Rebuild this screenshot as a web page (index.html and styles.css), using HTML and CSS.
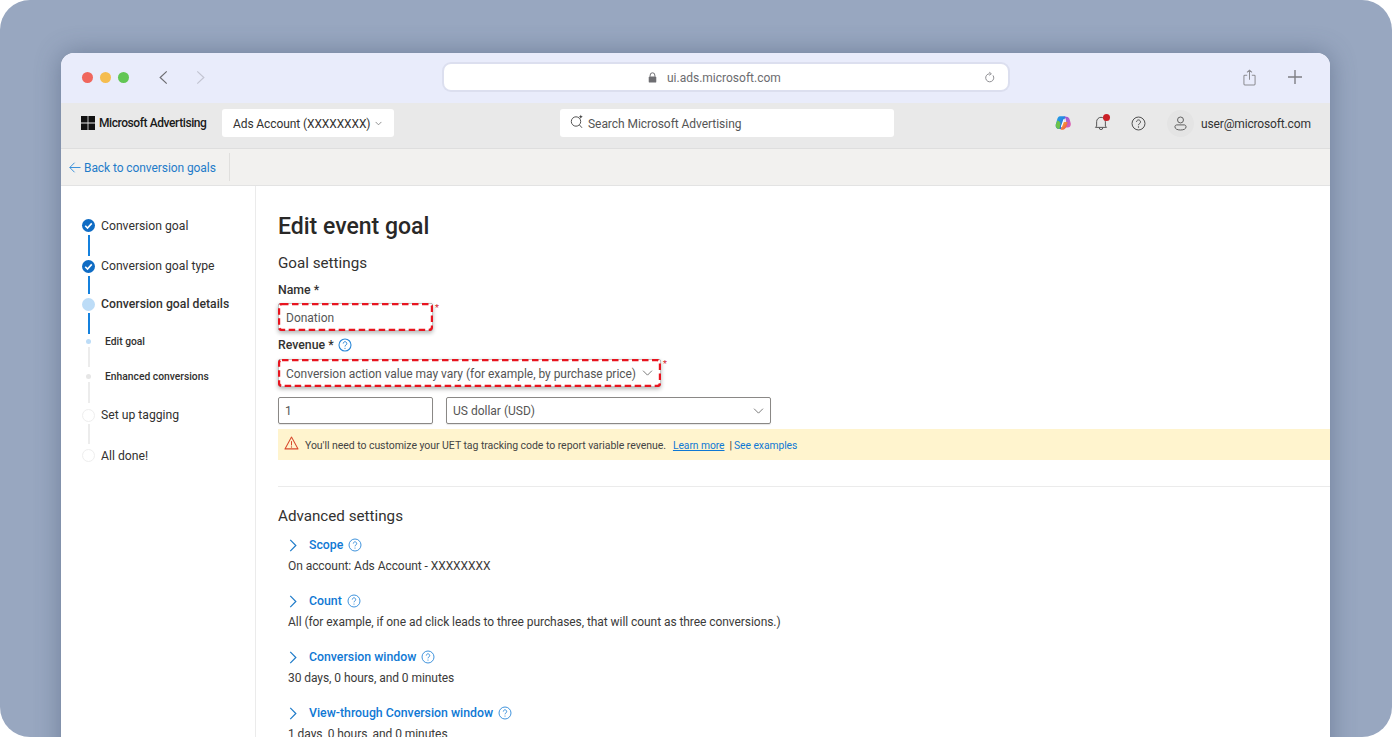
FILE: index.html
```html
<!DOCTYPE html>
<html lang="en">
<head>
<meta charset="utf-8">
<title>Edit event goal</title>
<link rel="stylesheet" href="styles.css">
</head>
<body>
<div class="page">
  <div class="window">
    <div class="toolbar">
      <div class="lights"><i class="red"></i><i class="yellow"></i><i class="green"></i></div>
      <svg class="nav back" viewBox="0 0 10 16"><path d="M9 1.500 2 8l7 6.500"/></svg>
      <svg class="nav fwd" viewBox="0 0 10 16"><path d="M1 1.500 8 8l-7 6.500"/></svg>
      <div class="url">
        <svg class="lock" viewBox="0 0 10 12"><path d="M2.400 5V3.400a2.600 2.600 0 0 1 5.200 0V5" fill="none" stroke="#6e6e72" stroke-width="1.100"/><rect x=".8" y="5" width="8.400" height="6.600" rx="1" fill="#6e6e72"/></svg>
        <span class="nudge">ui.ads.microsoft.com</span>
        <svg class="reload" viewBox="0 0 12 13"><path d="M9.800 4.200a4.400 4.400 0 1 1-3.600-1.800" fill="none" stroke="#85858a" stroke-width="1"/><path d="M5.700.7 8 2.400 5.700 4.100" fill="none" stroke="#85858a" stroke-width="1"/></svg>
      </div>
      <svg class="share" viewBox="0 0 14 18"><path d="M4.500 6.500H2a1 1 0 0 0-1 1V16a1 1 0 0 0 1 1h10a1 1 0 0 0 1-1V7.500a1 1 0 0 0-1-1H9.500M7 11.500V1M4.300 3.500 7 1l2.700 2.500" fill="none" stroke="#8c8c92" stroke-width="1.100"/></svg>
      <svg class="plus" viewBox="0 0 14 14"><path d="M7 0v14M0 7h14" stroke="#7e7e84" stroke-width="1.400"/></svg>
    </div>

    <header class="appbar">
      <svg class="winlogo" viewBox="0 0 14 14"><path d="M0 0h6.600v6.600H0zM7.400 0H14v6.600H7.400zM0 7.400h6.600V14H0zM7.400 7.400H14V14H7.400z" fill="#111"/></svg>
      <span class="brand">Microsoft Advertising</span>
      <div class="account"><span class="nudge">Ads Account (XXXXXXXX)</span><svg viewBox="0 0 8 5"><path d="M.7.7 4 4l3.300-3.300" fill="none" stroke="#777" stroke-width=".9"/></svg></div>
      <div class="search">
        <svg viewBox="0 0 15 15"><circle cx="6" cy="7.500" r="4.700" fill="none" stroke="#555" stroke-width="1"/><path d="m9.500 11 2.500 2.800" stroke="#555" stroke-width="1"/><path d="M10.800.5c.3 1.500.7 2 2.200 2.300-1.500.3-1.900.8-2.200 2.300-.3-1.500-.7-2-2.200-2.300 1.500-.3 1.900-.8 2.200-2.300Z" fill="#444"/></svg>
        <span class="nudge">Search Microsoft Advertising</span>
      </div>
      <div class="tools">
        <svg class="copilot" viewBox="0 0 16 16">
          <defs>
            <linearGradient id="cpA" x1="0" y1="0" x2="1" y2="1"><stop offset="0" stop-color="#22a7e8"/><stop offset="1" stop-color="#2b5fd9"/></linearGradient>
            <linearGradient id="cpB" x1="0" y1="0" x2="1" y2="1"><stop offset="0" stop-color="#f7b53a"/><stop offset="1" stop-color="#f0483f"/></linearGradient>
            <linearGradient id="cpC" x1="0" y1="0" x2="1" y2="1"><stop offset="0" stop-color="#8a5be0"/><stop offset="1" stop-color="#ec5fa8"/></linearGradient>
          </defs>
          <path d="M5 1.300h5.500L8 9 6 14H4C1.500 14 .2 12 .8 9.500L2 5C2.500 3 3.500 1.300 5 1.300Z" fill="url(#cpA)"/>
          <path d="M.8 9.500 2.300 5.500c1.500.2 3 1.200 3.200 3L4.500 14C2 14 .2 12 .8 9.500Z" fill="#6cc24a"/>
          <path d="M9 1.800h2.400c2 0 3 1.500 3.500 3.400l.8 3c.5 2.500-.7 4.400-3 4.400H9.400L11 7C11.500 5 10.500 3 9 1.800Z" fill="url(#cpC)"/>
          <path d="M5.500 14.700 8.300 7h4.200c-.2 2.500-1.500 7.700-4.700 7.700Z" fill="url(#cpB)"/>
          <path d="M6.500 11.500 9 4.500" stroke="#fff" stroke-width="1.200" stroke-linecap="round"/>
        </svg>
        <div class="bell">
          <svg viewBox="0 0 16 18"><path d="M3 12.500V7.500a5 5 0 0 1 10 0v5l1.300 1.500H1.700ZM6 14.500a2 2 0 0 0 4 0" fill="none" stroke="#444" stroke-width="1"/></svg>
          <i></i>
        </div>
        <svg class="help" viewBox="0 0 16 16"><circle cx="8" cy="8" r="6.900" fill="none" stroke="#444" stroke-width="1"/><path d="M5.900 6.200a2.100 2.100 0 1 1 3.300 1.800c-.8.500-1.200.9-1.200 1.800" fill="none" stroke="#444" stroke-width="1"/><circle cx="8" cy="11.700" r=".7" fill="#444"/></svg>
        <div class="avatar"><svg viewBox="0 0 14 16"><circle cx="7" cy="4.200" r="3.200" fill="none" stroke="#555" stroke-width="1"/><path d="M1 11.500c0-1.200 1-2 2-2h8c1 0 2 .8 2 2 0 2.300-2.500 3.500-6 3.500s-6-1.200-6-3.500Z" fill="none" stroke="#555" stroke-width="1"/></svg></div>
        <span class="user nudge">user@microsoft.com</span>
      </div>
    </header>

    <div class="subnav">
      <a class="backlink"><svg viewBox="0 0 13 12"><path d="M12.500 6H1M6 .8 .8 6 6 11.200" fill="none" stroke="#2b88d8" stroke-width="1"/></svg><span class="nudge">Back to conversion goals</span></a>
    </div>

    <div class="body">
      <nav class="sidebar">
        <div class="step"><span class="dot done"><svg viewBox="0 0 12 12"><path d="m3 6.200 2.100 2.100L9 4" fill="none" stroke="#fff" stroke-width="1.500"/></svg></span><span class="nudge">Conversion goal</span></div>
        <div class="line on la"></div>
        <div class="step"><span class="dot done"><svg viewBox="0 0 12 12"><path d="m3 6.200 2.100 2.100L9 4" fill="none" stroke="#fff" stroke-width="1.500"/></svg></span><span>Conversion goal type</span></div>
        <div class="line on lb"></div>
        <div class="step strong"><span class="dot current"></span><span>Conversion goal details</span></div>
        <div class="line on lc"></div>
        <div class="step sub"><span class="mini blue"></span><span>Edit goal</span></div>
        <div class="line ld"></div>
        <div class="step sub"><span class="mini"></span><span>Enhanced conversions</span></div>
        <div class="line le"></div>
        <div class="step"><span class="dot empty"></span><span>Set up tagging</span></div>
        <div class="line lf"></div>
        <div class="step"><span class="dot empty"></span><span class="nudge">All done!</span></div>
      </nav>

      <main class="main">
        <h1>Edit event goal</h1>
        <h2 class="first">Goal settings</h2>
        <div class="label">Name *</div>
        <div class="marked short">
          <div class="field"><span class="nudge">Donation</span><svg class="dash" viewBox="0 0 155 28"><rect x="1" y="1" width="153" height="26" rx="3"/></svg></div>
          <span class="req">*</span>
        </div>
        <div class="label rev">Revenue * <svg class="q" viewBox="0 0 14 14"><circle cx="7" cy="7" r="6" fill="none" stroke="#2b88d8" stroke-width="1.100"/><path d="M5.200 5.500a1.800 1.800 0 1 1 2.800 1.500c-.7.400-1 .8-1 1.500" fill="none" stroke="#2b88d8" stroke-width="1"/><circle cx="7" cy="10.300" r=".6" fill="#2b88d8"/></svg></div>
        <div class="marked long">
          <div class="field select"><span class="nudge">Conversion action value may vary (for example, by purchase price)</span><svg class="arrow" viewBox="0 0 12 7"><path d="M.8.8 6 6l5.200-5.200" fill="none" stroke="#666" stroke-width="1"/></svg><svg class="dash" viewBox="0 0 383 28"><rect x="1" y="1" width="381" height="26" rx="3"/></svg></div>
          <span class="req">*</span>
        </div>
        <div class="pair">
          <div class="plain amount">1</div>
          <div class="plain select currency"><span>US dollar (USD)</span><svg class="arrow" viewBox="0 0 12 7"><path d="M.8.8 6 6l5.200-5.200" fill="none" stroke="#666" stroke-width="1"/></svg></div>
        </div>
        <div class="warn">
          <svg viewBox="0 0 16 15"><path d="M8 1.200 15 13.800H1Z" fill="none" stroke="#d8492d" stroke-width="1.100" stroke-linejoin="round"/><path d="M8 5.500v4.600" stroke="#d8492d" stroke-width="1.100"/><circle cx="8" cy="11.800" r=".7" fill="#d8492d"/></svg>
          <span class="warntext nudge">You'll need to customize your UET tag tracking code to report variable revenue.</span>
          <a class="under nudge">Learn more</a><span class="bar nudge">|</span><a class="nudge">See examples</a>
        </div>
        <hr>
        <h2>Advanced settings</h2>
        <section class="adv">
          <div class="advhead"><svg class="chev" viewBox="0 0 9 14"><path d="M1 1l6 6-6 6"/></svg><a>Scope</a><svg class="q" viewBox="0 0 14 14"><circle cx="7" cy="7" r="6" fill="none" stroke="#2b88d8" stroke-width=".9"/><path d="M5.300 5.500a1.700 1.700 0 1 1 2.700 1.400c-.7.400-1 .8-1 1.400" fill="none" stroke="#2b88d8" stroke-width=".9"/><circle cx="7" cy="10" r=".6" fill="#2b88d8"/></svg></div>
          <p>On account: Ads Account - XXXXXXXX</p>
        </section>
        <section class="adv">
          <div class="advhead"><svg class="chev" viewBox="0 0 9 14"><path d="M1 1l6 6-6 6"/></svg><a>Count</a><svg class="q" viewBox="0 0 14 14"><circle cx="7" cy="7" r="6" fill="none" stroke="#2b88d8" stroke-width=".9"/><path d="M5.300 5.500a1.700 1.700 0 1 1 2.700 1.400c-.7.400-1 .8-1 1.400" fill="none" stroke="#2b88d8" stroke-width=".9"/><circle cx="7" cy="10" r=".6" fill="#2b88d8"/></svg></div>
          <p>All (for example, if one ad click leads to three purchases, that will count as three conversions.)</p>
        </section>
        <section class="adv">
          <div class="advhead"><svg class="chev" viewBox="0 0 9 14"><path d="M1 1l6 6-6 6"/></svg><a>Conversion window</a><svg class="q" viewBox="0 0 14 14"><circle cx="7" cy="7" r="6" fill="none" stroke="#2b88d8" stroke-width=".9"/><path d="M5.300 5.500a1.700 1.700 0 1 1 2.700 1.400c-.7.400-1 .8-1 1.400" fill="none" stroke="#2b88d8" stroke-width=".9"/><circle cx="7" cy="10" r=".6" fill="#2b88d8"/></svg></div>
          <p>30 days, 0 hours, and 0 minutes</p>
        </section>
        <section class="adv">
          <div class="advhead"><svg class="chev" viewBox="0 0 9 14"><path d="M1 1l6 6-6 6"/></svg><a>View-through Conversion window</a><svg class="q" viewBox="0 0 14 14"><circle cx="7" cy="7" r="6" fill="none" stroke="#2b88d8" stroke-width=".9"/><path d="M5.300 5.500a1.700 1.700 0 1 1 2.700 1.400c-.7.400-1 .8-1 1.400" fill="none" stroke="#2b88d8" stroke-width=".9"/><circle cx="7" cy="10" r=".6" fill="#2b88d8"/></svg></div>
          <p>1 days, 0 hours, and 0 minutes</p>
        </section>
      </main>
    </div>
  </div>
</div>
</body>
</html>
```

FILE: styles.css
```css
* { box-sizing: border-box; }
html, body { margin: 0; height: 100%; background: #fff; overflow: hidden; }
body { font-family: Roboto, "Noto Sans", sans-serif; font-size: 12px; color: #323130; white-space: nowrap; }
svg { display: block; flex: none; }
a { color: #0f78d4; }
.nudge { padding-top: 2px; }

.page {
  height: 737px;
  padding: 53px 62px 0 61px;
  background: #98a7c0;
  border-radius: 30px;
  overflow: hidden;
}
.window {
  height: 720px;
  background: #fff;
  border-radius: 13px 13px 0 0;
  overflow: hidden;
  box-shadow: 0 0 26px rgba(60, 75, 105, .45);
}

/* browser chrome */
.toolbar {
  height: 50px;
  padding: 0 0 2px 21px;
  background: #e9ecfb;
  display: flex;
  align-items: center;
}
.lights { display: flex; gap: 7px; }
.lights i { width: 11px; height: 11px; border-radius: 50%; }
.red { background: #f0665d; }
.yellow { background: #f5bd4f; }
.green { background: #62c654; }
.nav { width: 10px; height: 15px; fill: none; stroke-width: 1.300; }
.back { margin-left: 29px; stroke: #6f6f74; }
.fwd { margin-left: 28px; stroke: #c3c5d2; }
.url {
  margin-left: 238px;
  width: 564px;
  height: 26px;
  padding-left: 204px;
  background: #fff;
  border-radius: 7px;
  box-shadow: 0 0 0 2px #dcdfef;
  display: flex;
  align-items: center;
  color: #6c6c70;
  font-size: 12px;
}
.lock { width: 9px; height: 11px; margin-right: 10px; }
.reload { width: 11px; height: 13px; margin-left: auto; margin-right: 13px; }
.share { width: 13px; height: 17px; margin-left: 235px; }
.plus { width: 14px; height: 14px; margin-left: 32px; }

/* app bar */
.appbar {
  height: 46px;
  padding: 0 20px 5px 20px;
  background: #e9e9e9;
  border-bottom: 1px solid #dedede;
  display: flex;
  align-items: center;
}
.winlogo { width: 14px; height: 14px; }
.brand { margin-left: 4px; width: 107px; flex: none; font-weight: 500; font-size: 12px; color: #1a1a1a; letter-spacing: -.42px; }
.account {
  margin-left: 16px;
  width: 172px;
  height: 28px;
  padding-left: 11px;
  background: #fff;
  border-radius: 3px;
  display: flex;
  align-items: center;
  gap: 5px;
  letter-spacing: -.1px;
  flex: none;
}
.account svg { width: 7px; height: 5px; }
.search {
  margin-left: 166px;
  width: 334px;
  height: 28px;
  padding-left: 10px;
  background: #fff;
  border-radius: 3px;
  display: flex;
  align-items: center;
  gap: 3px;
  letter-spacing: -.05px;
  color: #555;
  flex: none;
}
.search svg { width: 15px; height: 15px; margin-top: -3px; }
.tools { margin-left: auto; display: flex; align-items: center; }
.copilot { width: 16px; height: 16px; }
.bell { margin-left: 22px; width: 16px; height: 18px; position: relative; flex: none; }
.bell svg { width: 14px; height: 16px; margin: 1px 0 0 1px; }
.bell i { position: absolute; left: 10px; top: 0; width: 7px; height: 7px; border-radius: 50%; background: #cb2027; }
.help { width: 15px; height: 15px; margin-left: 22px; }
.avatar {
  margin-left: 21px;
  width: 27px;
  height: 27px;
  border-radius: 50%;
  background: #e4e4e4;
  display: flex;
  align-items: center;
  justify-content: center;
  flex: none;
}
.avatar svg { width: 13px; height: 15px; }
.user { margin-left: 7px; width: 109px; flex: none; letter-spacing: -.15px; color: #333; }

/* sub nav */
.subnav {
  height: 37px;
  background: #f2f1ef;
  border-bottom: 1px solid #e3e3e3;
  display: flex;
  align-items: center;
  padding-left: 8px;
}
.backlink {
  height: 28px;
  width: 161px;
  border-right: 1px solid #e0dfdd;
  display: flex;
  align-items: center;
  gap: 3px;
  letter-spacing: -.08px;
  color: #1f7cc9;
}
.backlink svg { width: 12px; height: 11px; }

/* layout */
.body { display: flex; height: 551px; }
.sidebar {
  width: 195px;
  padding: 31px 0 0 21px;
  border-right: 1px solid #ebebeb;
  flex: none;
  font-size: 12.200px;
  color: #323130;
}
.step { height: 16px; display: flex; align-items: center; gap: 6px; }
.step.strong { font-weight: 500; letter-spacing: .03px; }
.dot { width: 13px; height: 13px; border-radius: 50%; flex: none; }
.done { background: #0f6cc4; }
.current { background: #bcdcf7; }
.empty { background: #fff; border: 1px solid #eeeeee; }
.step.sub { font-size: 10.300px; font-weight: 500; gap: 14px; }
.mini { width: 5px; height: 5px; margin-left: 4px; border-radius: 50%; background: #e6e6e6; flex: none; }
.mini.blue { background: #bcdcf7; }
.line { width: 2px; margin-left: 5.500px; background: #ececec; }
.line.on { background: #1481de; }
.la { height: 21px; margin-top: 2px; margin-bottom: 2px; }
.lb { height: 18px; margin-top: 2px; margin-bottom: 2px; }
.lc { height: 21px; margin-top: 1px; margin-bottom: -1px; }
.ld { height: 20px; margin-top: -2px; margin-bottom: 1px; }
.le { height: 21px; margin-top: -2px; margin-bottom: 4px; }
.lf { height: 20px; margin-top: 1px; margin-bottom: 3px; }

.main { flex: 1; min-width: 0; padding: 26px 0 0 22px; overflow: hidden; }
h1 { margin: 0; font-size: 23px; line-height: 30px; font-weight: 500; color: #292827; }
h2 { margin: 0; font-size: 15.200px; font-weight: 400; line-height: 22px; color: #323130; }
h2.first { margin-top: 10px; }
.label { margin-top: 8px; height: 16px; font-weight: 500; font-size: 12.300px; line-height: 16px; }
.label.rev { margin-top: 6px; display: flex; align-items: center; gap: 4px; }
.label .q { width: 14px; height: 14px; }
.marked { display: flex; margin-top: 5px; height: 28px; }
.marked.short .field { width: 155px; }
.marked.long { margin-top: 6px; }
.marked.long .field { width: 383px; letter-spacing: -.03px; }
.field {
  position: relative;
  height: 28px;
  padding: 0 8px;
  border-radius: 3px;
  background: #fff;
  display: flex;
  align-items: center;
  color: #555;
  box-shadow: 0 0 0 .5px #8a8a8a inset, 0 2px 4px rgba(0, 0, 0, .3);
}
.dash { position: absolute; inset: 0; width: 100%; height: 100%; fill: none; stroke: #e8141f; stroke-width: 2.400; stroke-dasharray: 6.500 3.500; }
.req { color: #d6242c; font-size: 9px; line-height: 10px; margin-left: 2px; }
.select { justify-content: space-between; }
.arrow { width: 11px; height: 6px; }
.pair { display: flex; gap: 13px; margin-top: 10px; }
.plain {
  height: 27px;
  border: 1px solid #8a8886;
  border-radius: 2px;
  display: flex;
  align-items: center;
  padding: 0 6px;
  color: #555;
  box-shadow: 0 1px 1px rgba(0, 0, 0, .1);
}
.amount { width: 155px; }
.currency { width: 325px; }
.warn {
  margin-top: 5px;
  height: 31px;
  background: #fff4ce;
  display: flex;
  align-items: center;
  padding-left: 6px;
  font-size: 10.500px;
  letter-spacing: -.05px;
}
.warn svg { width: 15px; height: 14px; margin-top: -4px; }
.warntext { margin-left: 6px; color: #444; }
.warn a { color: #0f78d4; font-size: 10.300px; }
.under { margin-left: 7px; text-decoration: underline; }
.bar { margin: 0 2px 0 5px; }
hr { margin: 26px 0 0; border: 0; border-top: 1px solid #ebebeb; }
hr + h2 { margin-top: 18px; }
.adv { padding-left: 10px; height: 56px; }
h2 + .adv { margin-top: 9px; }
.advhead { height: 18px; display: flex; align-items: center; font-size: 12.300px; font-weight: 500; }
.chev { width: 9px; height: 13px; fill: none; stroke: #1f7cc9; stroke-width: 1.300; margin-left: 1px; margin-right: 11px; }
.advhead .q { width: 14px; height: 14px; margin-left: 5px; }
.adv p { margin: 4px 0 0; line-height: 16px; letter-spacing: -.06px; color: #3b3a39; }
```
